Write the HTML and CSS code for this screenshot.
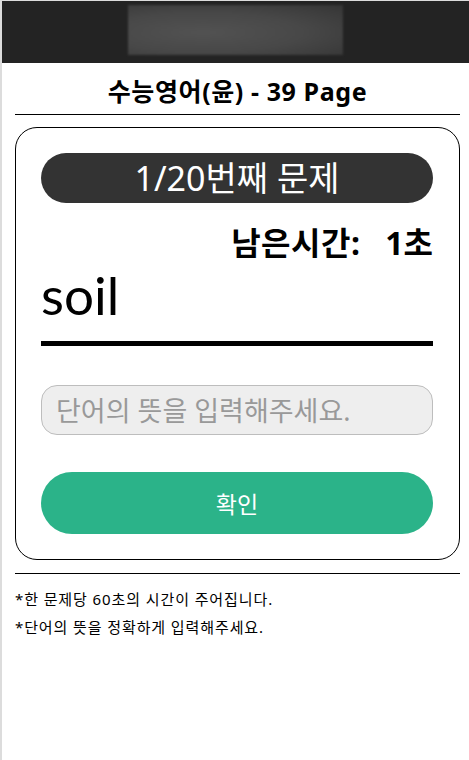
FILE: index.html
```html
<!DOCTYPE html>
<html lang="ko">
  <head>
    <meta charset="UTF-8" />
    <meta name="viewport" content="width=device-width, initial-scale=1.0" />
    <title>수능영어 단어 시험</title>
    <link rel="stylesheet" href="styles.css">
  </head>
  <body>
    <div class="page">
      <header class="top-bar">
        <div class="top-banner"></div>
      </header>
      <div class="content">
        <h1 class="title">수능영어(윤) - 39 Page</h1>
        <hr class="rule" />
        <div class="quiz-card">
          <div class="quiz-count">1/20번째 문제</div>
          <div class="timer">남은시간: <span class="timer-num">1초</span></div>
          <div class="word">soil</div>
          <div class="word-line"></div>
          <input class="answer" type="text" placeholder="단어의 뜻을 입력해주세요." />
          <button class="submit">확인</button>
        </div>
        <hr class="rule rule-bottom" />
        <p class="note">*한 문제당 60초의 시간이 주어집니다.</p>
        <p class="note">*단어의 뜻을 정확하게 입력해주세요.</p>
      </div>
    </div>
  </body>
</html>
```

FILE: styles.css
```css
html,
body {
  margin: 0;
  height: 100%;
  font-family: "Noto Sans", "Noto Sans CJK KR", sans-serif;
  background: #fff;
}
.page {
  min-height: 100%;
  border-left: 2px solid #dcdcdc;
  box-sizing: border-box;
}
.top-bar {
  height: 58px;
  border-top: 1px solid #dcdcdc;
  background: #232323;
  display: flex;
  justify-content: center;
  align-items: flex-start;
  padding-top: 4px;
}
.top-banner {
  width: 215px;
  height: 50px;
  background: radial-gradient(ellipse at 35% 55%, #525252 0%, #484848 50%, #353535 100%);
  filter: blur(1px);
}
.content {
  padding: 0 9px 0 13px;
}
.title {
  margin: 0;
  padding-top: 13px;
  height: 38px;
  line-height: 30px;
  font-size: 25px;
  letter-spacing: 0.6px;
  font-weight: bold;
  text-align: center;
  color: #000;
}
.rule {
  margin: 0;
  border: none;
  border-top: 1px solid #000;
}
.quiz-card {
  margin-top: 12px;
  border: 1px solid #000;
  border-radius: 22px;
  padding: 25px 26px 25px 25px;
  display: flex;
  flex-direction: column;
}
.quiz-count {
  height: 50px;
  line-height: 50px;
  border-radius: 25px;
  background: #333;
  color: #fff;
  font-size: 34px;
  text-align: center;
}
.timer {
  margin-top: 20px;
  text-align: right;
  font-size: 32px;
  letter-spacing: 0.5px;
  font-weight: bold;
  line-height: 40px;
  color: #000;
}
.timer-num {
  margin-left: 16px;
  letter-spacing: 0;
}
.word {
  font-family: Lato, "Noto Sans", sans-serif;
  font-size: 53px;
  line-height: 64px;
  color: #000;
}
.word-line {
  margin-top: 14px;
  height: 5px;
  background: #000;
}
.answer {
  margin-top: 39px;
  height: 50px;
  box-sizing: border-box;
  border: 1px solid #bdbdbd;
  border-radius: 16px;
  background: #eee;
  padding: 0 14px;
  font-family: inherit;
  font-size: 27px;
  outline: none;
}
.answer::placeholder {
  color: #999;
}
.submit {
  margin-top: 37px;
  height: 62px;
  border: none;
  border-radius: 31px;
  background: #2bb389;
  color: #fff;
  font-family: inherit;
  font-size: 23px;
  cursor: pointer;
}
.rule-bottom {
  margin-top: 13px;
}
.note {
  margin: 15px 0 0;
  font-size: 15px;
  letter-spacing: 0.9px;
  line-height: 20px;
  color: #000;
}
.note + .note {
  margin-top: 8px;
}
```
